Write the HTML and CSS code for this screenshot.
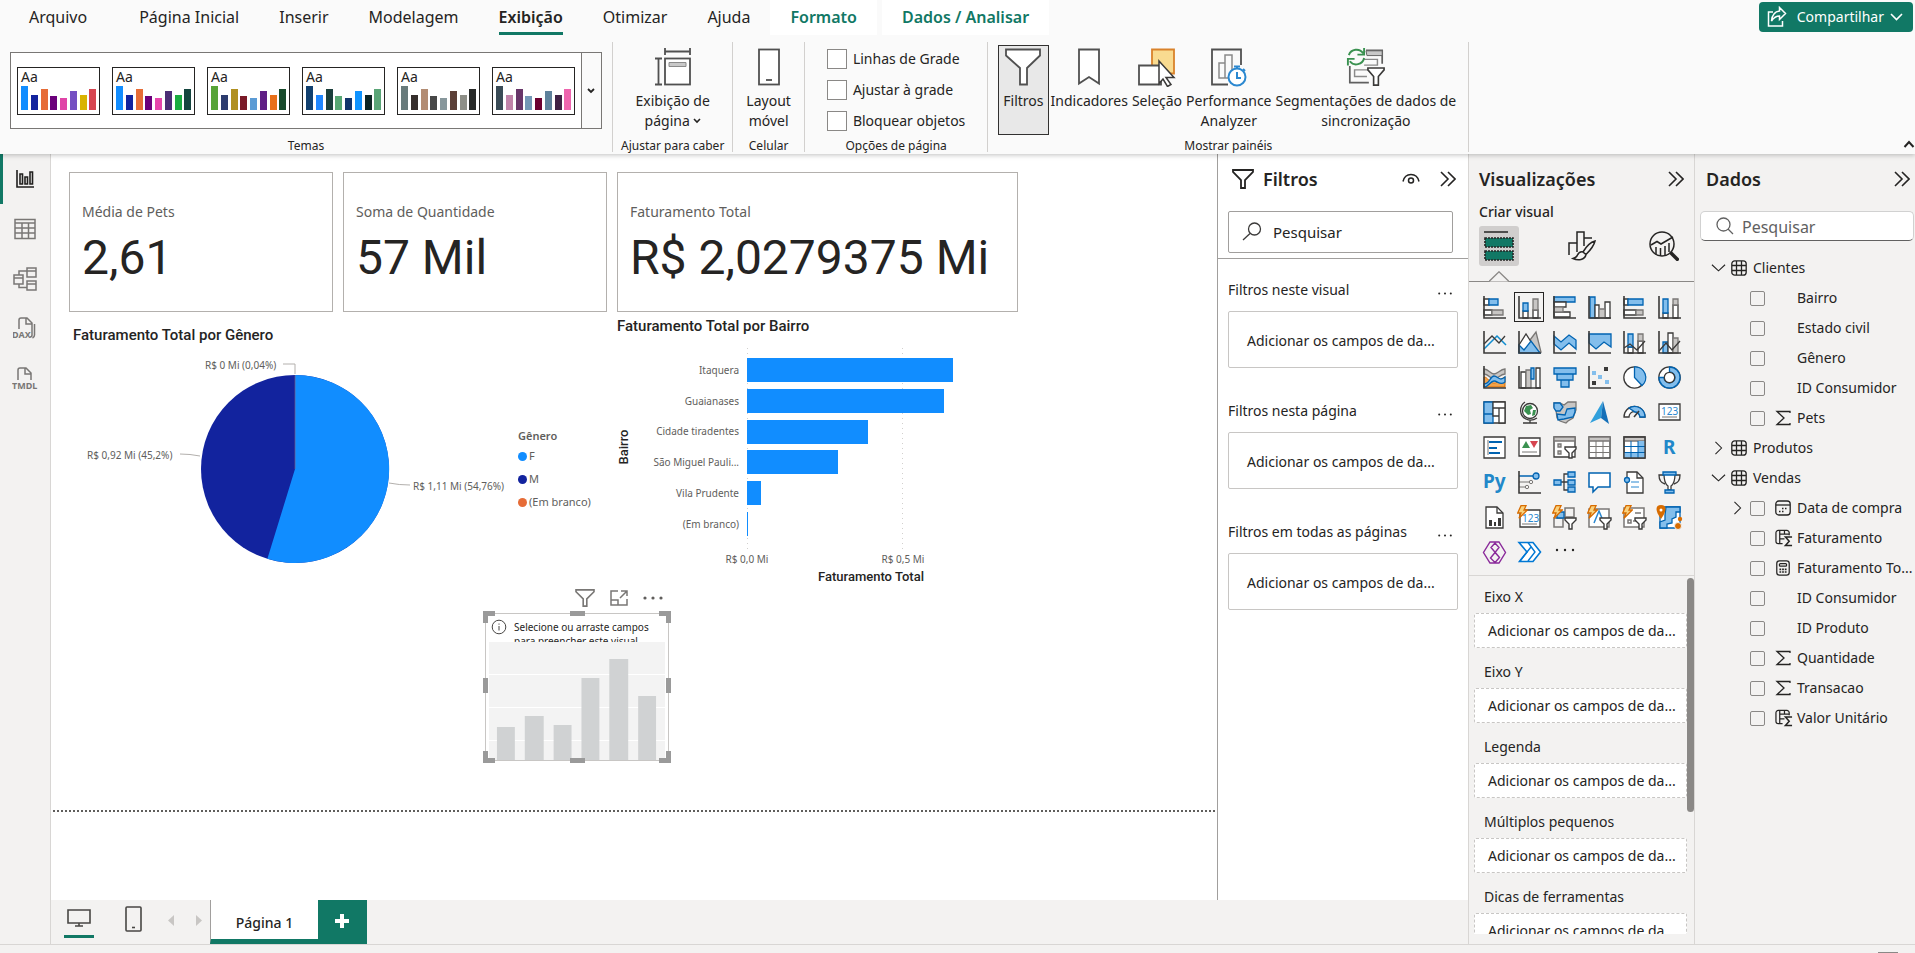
FILE: index.html
```html
<!DOCTYPE html>
<html lang="pt-BR">
<head>
  <meta charset="UTF-8">
  <title>Relatório de Faturamento</title>
  <meta name="viewport" content="width=device-width, initial-scale=1.0">
  <link rel="stylesheet" href="styles.css">
</head>
<body>
  <!-- shared icons -->
  <svg class="sprite" width="0" height="0">
    <symbol id="chevrons" viewBox="0 0 16 16"><path d="M1 1l7 7-7 7M8 1l7 7-7 7" fill="none" stroke="currentColor" stroke-width="1.6"/></symbol>
    <symbol id="funnel" viewBox="0 0 22 20"><path d="M1 1h20v2l-8 8v8H9v-8L1 3z" fill="none" stroke="currentColor" stroke-width="1.8"/></symbol>
    <symbol id="dots" viewBox="0 0 14 3"><g fill="currentColor"><circle cx="1.200" cy="1.500" r="1"/><circle cx="7" cy="1.500" r="1"/><circle cx="12.800" cy="1.500" r="1"/></g></symbol>
    <symbol id="down" viewBox="0 0 16 10"><path d="M1 1.500l7 6.500 7-6.500" fill="none" stroke="currentColor" stroke-width="1.2"/></symbol>
    <symbol id="right" viewBox="0 0 10 16"><path d="M1.500 1l7 7-7 7" fill="none" stroke="currentColor" stroke-width="1.2"/></symbol>
    <symbol id="tbl" viewBox="0 0 16 16"><g fill="none" stroke="currentColor" stroke-width="1.3"><rect x=".8" y=".8" width="14.400" height="14.400" rx="3"/><path d="M5.500 1v14M10.500 1v14M1 5.500h14M1 10.500h14"/></g></symbol>
    <symbol id="sigma" viewBox="0 0 16 16"><path d="M15 3V1.500H2L9 8l-7 6.500h13V13" fill="none" stroke="currentColor" stroke-width="1.3"/></symbol>
    <symbol id="calcol" viewBox="0 0 19 18"><g fill="none" stroke="currentColor" stroke-width="1.3"><path d="M8 15H3.500a2.500 2.500 0 0 1-2.500-2.500v-9A2.500 2.500 0 0 1 3.500 1h9A2.500 2.500 0 0 1 15 3.500V6M5 1v14M10 1v4M5 5h10M5 10h5"/><path d="M18 8h-7l4 4.500-4 4.500h7" stroke-width="1.600"/></g></symbol>
    <symbol id="bolt" viewBox="0 0 11 14"><path d="M4 .7h5L7 5h3.300L2 13.300 4 8H.7z" fill="#f8d27e" stroke="#d86c00" stroke-width="1.3"/></symbol>
    <symbol id="minifunnel" viewBox="0 0 13 13"><path d="M1 1h11v2L8 7v5H5V7L1 3z" fill="#fff" stroke="#3b3a39" stroke-width="1.4"/></symbol>
  </svg>

  <header class="ribbon">
    <div class="top-row">
      <nav class="tabs">
        <a href="#" class="file">Arquivo</a>
        <a href="#">Página Inicial</a>
        <a href="#">Inserir</a>
        <a href="#">Modelagem</a>
        <a href="#" class="active"><span>Exibição</span></a>
        <a href="#">Otimizar</a>
        <a href="#">Ajuda</a>
        <a href="#" class="context">Formato</a>
        <a href="#" class="context">Dados / Analisar</a>
      </nav>
      <button class="share">
        <svg width="20" height="22" viewBox="0 0 20 22" fill="none" stroke="#fff" stroke-width="1.500"><path d="M6 6H1.500v14h14v-5"/><path d="M12.500 1.500l6 6-6 6v-3.500C8.500 10 6.500 12 4.500 15c.5-5 3-9.500 8-10z"/></svg>
        Compartilhar
        <svg width="13" height="8" viewBox="0 0 13 8" fill="none" stroke="#fff" stroke-width="1.600"><path d="M1 1l5.500 5.500L12 1"/></svg>
      </button>
    </div>

    <div class="groups">
      <section class="group themes-group">
        <div class="group-body">
          <div class="themes">
            <button class="theme">Aa
              <svg width="75" height="24"><rect fill="#118dff" width="7" height="24"/><rect fill="#12239e" x="10" y="9" width="7" height="15"/><rect fill="#e66c37" x="20" y="3" width="7" height="21"/><rect fill="#6b007b" x="29" y="10" width="7" height="14"/><rect fill="#e044a7" x="39" y="12" width="7" height="12"/><rect fill="#744ec2" x="49" y="5" width="7" height="19"/><rect fill="#d9b300" x="59" y="9" width="7" height="15"/><rect fill="#d64550" x="68" y="3" width="7" height="21"/></svg>
            </button>
            <button class="theme">Aa
              <svg width="75" height="24"><rect fill="#118dff" width="7" height="24"/><rect fill="#12239e" x="10" y="9" width="7" height="15"/><rect fill="#e66c37" x="20" y="3" width="7" height="21"/><rect fill="#6b007b" x="29" y="10" width="7" height="14"/><rect fill="#e645ab" x="39" y="12" width="7" height="12"/><rect fill="#4b2e75" x="49" y="5" width="7" height="19"/><rect fill="#1aab40" x="59" y="9" width="7" height="15"/><rect fill="#15453f" x="68" y="3" width="7" height="21"/></svg>
            </button>
            <button class="theme">Aa
              <svg width="75" height="24"><rect fill="#57a337" width="7" height="24"/><rect fill="#2c3b6e" x="10" y="9" width="7" height="15"/><rect fill="#b09020" x="20" y="3" width="7" height="21"/><rect fill="#7a1a28" x="29" y="10" width="7" height="14"/><rect fill="#5b9bd5" x="39" y="12" width="7" height="12"/><rect fill="#5f1e85" x="49" y="5" width="7" height="19"/><rect fill="#e8701a" x="59" y="9" width="7" height="15"/><rect fill="#174a2b" x="68" y="3" width="7" height="21"/></svg>
            </button>
            <button class="theme">Aa
              <svg width="75" height="24"><rect fill="#11406f" width="7" height="24"/><rect fill="#1f86ff" x="10" y="9" width="7" height="15"/><rect fill="#1b3f3c" x="20" y="3" width="7" height="21"/><rect fill="#57a773" x="29" y="10" width="7" height="14"/><rect fill="#11346b" x="39" y="12" width="7" height="12"/><rect fill="#0f93ff" x="49" y="5" width="7" height="19"/><rect fill="#0c2422" x="59" y="9" width="7" height="15"/><rect fill="#5aa577" x="68" y="3" width="7" height="21"/></svg>
            </button>
            <button class="theme">Aa
              <svg width="75" height="24"><rect fill="#687a7b" width="7" height="24"/><rect fill="#352e2c" x="10" y="9" width="7" height="15"/><rect fill="#b28c73" x="20" y="3" width="7" height="21"/><rect fill="#484848" x="29" y="10" width="7" height="14"/><rect fill="#87979c" x="39" y="12" width="7" height="12"/><rect fill="#5c4038" x="49" y="5" width="7" height="19"/><rect fill="#8e8f88" x="59" y="9" width="7" height="15"/><rect fill="#272928" x="68" y="3" width="7" height="21"/></svg>
            </button>
            <button class="theme">Aa
              <svg width="75" height="24"><rect fill="#3a4b56" width="7" height="24"/><rect fill="#c083a9" x="10" y="9" width="7" height="15"/><rect fill="#683669" x="20" y="3" width="7" height="21"/><rect fill="#7397b5" x="29" y="10" width="7" height="14"/><rect fill="#6b0030" x="39" y="12" width="7" height="12"/><rect fill="#5e819b" x="49" y="5" width="7" height="19"/><rect fill="#3f2144" x="59" y="9" width="7" height="15"/><rect fill="#ee65ae" x="68" y="3" width="7" height="21"/></svg>
            </button>
            <button class="more-themes" aria-label="Mais temas"><svg width="8" height="6" viewBox="0 0 8 6"><path d="M1 1l3 3 3-3" fill="none" stroke="#252423" stroke-width="1.800"/></svg></button>
          </div>
        </div>
        <p class="group-name">Temas</p>
      </section>

      <section class="group fit-group">
        <div class="group-body">
          <button class="tool">
            <svg width="38" height="40" viewBox="0 0 38 40" fill="none" stroke="#505050" stroke-width="1.800"><path d="M11 1v7M36 1v7M11 4.500h25M1 11.500h7M1 37.500h7M4.500 11.500v26"/><rect x="11" y="11.500" width="25" height="26" fill="#fff"/><path d="M15 15.500h17v4H15z" fill="#c8c8c8" stroke="#8a8a8a" stroke-width="1"/></svg>
            <span>Exibição de<br>página<svg class="caret" width="8" height="6" viewBox="0 0 8 6"><path d="M1 1l3 3 3-3" fill="none" stroke="#252423" stroke-width="1.600"/></svg></span>
          </button>
        </div>
        <p class="group-name">Ajustar para caber</p>
      </section>

      <section class="group mobile-group">
        <div class="group-body">
          <button class="tool">
            <svg width="22" height="40" viewBox="0 0 22 40" fill="none" stroke="#505050" stroke-width="1.800"><rect x="1" y="2.500" width="20" height="35" fill="#fff"/><path d="M8 33h6"/></svg>
            <span>Layout<br>móvel</span>
          </button>
        </div>
        <p class="group-name">Celular</p>
      </section>

      <section class="group options-group">
        <div class="group-body checks">
          <label><input type="checkbox">Linhas de Grade</label>
          <label><input type="checkbox">Ajustar à grade</label>
          <label><input type="checkbox">Bloquear objetos</label>
        </div>
        <p class="group-name">Opções de página</p>
      </section>

      <section class="group panes-group">
        <div class="group-body">
          <button class="tool pressed">
            <svg width="36" height="40" viewBox="0 0 36 40"><path d="M1 2.500h34v6L22 21v16.500h-7V21L1 8.500z" fill="#fff" stroke="#505050" stroke-width="1.800"/></svg>
            <span>Filtros</span>
          </button>
          <button class="tool">
            <svg width="22" height="40" viewBox="0 0 22 40"><path d="M1 2.500h20v34L11 30 1 36.500z" fill="#fff" stroke="#505050" stroke-width="1.800"/></svg>
            <span>Indicadores</span>
          </button>
          <button class="tool">
            <svg width="38" height="40" viewBox="0 0 38 40" stroke-width="1.800"><path d="M14 2.500h22v24H14z" fill="#f9db90" stroke="#d9822b"/><path d="M1 18.500h22v19H1z" fill="#fff" stroke="#505050"/><path d="M21 14l15 16.500h-8l5 7-3.500 2-4.500-7.500-4 4.500z" fill="#fff" stroke="#3b3a39" stroke-width="1.500"/></svg>
            <span>Seleção</span>
          </button>
          <button class="tool">
            <svg width="36" height="40" viewBox="0 0 36 40" fill="none"><path d="M17 37.500H1v-35h29V18" stroke="#505050" stroke-width="1.800"/><path d="M8 16h6v15H8zM14 8h7v23h-7z" stroke="#8a8a8a" stroke-width="1.500"/><circle cx="26" cy="30" r="8.500" fill="#fff" stroke="#2b88d0" stroke-width="2"/><path d="M26 25v6h4M23 19.500h6M26 20v2M32 22l2 2" stroke="#2b88d0" stroke-width="2"/></svg>
            <span>Performance<br>Analyzer</span>
          </button>
          <button class="tool">
            <svg width="40" height="42" viewBox="0 0 40 42" fill="none"><path d="M20 3.500h17v14M3 20v17.500h20" stroke="#606060" stroke-width="1.800"/><path d="M20 4h17v5H21z" fill="#c8c8c8" stroke="#606060"/><path d="M18 13h14v6H18M24 24H8v7h13" stroke="#8a8a8a" stroke-width="1.500"/><path d="M2 8.500a8.500 8.500 0 0 1 15-2M18 1v7h-7M18 11.500a8.500 8.500 0 0 1-15 3.500M1 19.500v-7h7" stroke="#3a9150" stroke-width="2"/><path d="M22 22h17v2l-6 7v9h-5v-9l-6-7z" fill="#fff" stroke="#3b3a39" stroke-width="1.700"/></svg>
            <span>Segmentações de dados de<br>sincronização</span>
          </button>
        </div>
        <p class="group-name">Mostrar painéis</p>
      </section>

      <button class="collapse" aria-label="Recolher faixa"><svg width="12" height="8" viewBox="0 0 12 8"><path d="M1.500 7L6 2l4.500 5" fill="none" stroke="#252423" stroke-width="2"/></svg></button>
    </div>
  </header>

  <div class="workspace">
    <div class="left">
      <nav class="rail">
        <a href="#" class="current" aria-label="Relatório"><svg width="20" height="20" viewBox="0 0 20 20" fill="none" stroke="#201f1e" stroke-width="1.600"><path d="M2 1v17h17"/><path d="M5 5h2.500v10H5zM10 8h2.500v7H10zM15 3h2.500v12H15z"/></svg></a>
        <a href="#" aria-label="Tabela"><svg width="22" height="22" viewBox="0 0 22 22" fill="none" stroke="#797775" stroke-width="1.500"><path d="M1 1.500h20v19H1zM1 5h20M1 10h20M1 15h20M8 5v15M14.500 5v15"/></svg></a>
        <a href="#" aria-label="Modelo"><svg width="24" height="24" viewBox="0 0 24 24" fill="none" stroke="#797775" stroke-width="1.500"><path d="M1 8h9v9H1zM1 11h9M14 1h9v9h-9zM14 4h9M14 14h9v9h-9zM14 17h9M6 8V4h8M6 17v3.500h8"/></svg></a>
        <a href="#" aria-label="Consulta DAX"><svg width="24" height="24" viewBox="0 0 24 24" fill="none" stroke="#797775" stroke-width="1.500"><path d="M6 12V3q0-2 2-2h6l5 5v12q0 2-2 2M13 1v6h6M21.500 7v11q0 2-2 3"/><text x="-1" y="21">DAX</text></svg></a>
        <a href="#" aria-label="TMDL"><svg width="26" height="24" viewBox="0 0 26 24" fill="none" stroke="#797775" stroke-width="1.500"><path d="M6 13V3q0-2 2-2h6l5 5v7M13 1v6h6"/><text x="0" y="22">TMDL</text></svg></a>
      </nav>

      <div class="stage">
        <main class="canvas">
          <div class="report">
            <article class="card"><h3>Média de Pets</h3><p>2,61</p></article>
            <article class="card"><h3>Soma de Quantidade</h3><p>57 Mil</p></article>
            <article class="card"><h3>Faturamento Total</h3><p>R$ 2,0279375 Mi</p></article>

            <figure class="pie">
              <figcaption>Faturamento Total por Gênero</figcaption>
              <div class="pie-body">
                <svg width="446" height="225" viewBox="0 0 446 225">
                  <circle cx="226" cy="124" r="94" fill="#12239e"/>
                  <path d="M226 124V30A94 94 0 1 1 198.400 213.800z" fill="#118dff"/>
                  <path d="M226 124V30" stroke="#7a5a80" stroke-width=".7"/>
                  <path d="M214 19h12v10M111 109q10 0 20 2M320 138q10 2 21 2" fill="none" stroke="#b3b0ad"/>
                  <text x="136" y="24">R$ 0 Mi (0,04%)</text>
                  <text x="18" y="114">R$ 0,92 Mi (45,2%)</text>
                  <text x="344" y="145">R$ 1,11 Mi (54,76%)</text>
                </svg>
                <ul class="legend">
                  <li class="legend-title">Gênero</li>
                  <li class="f">F</li>
                  <li class="m">M</li>
                  <li class="blank">(Em branco)</li>
                </ul>
              </div>
            </figure>

            <figure class="bars">
              <figcaption>Faturamento Total por Bairro</figcaption>
              <svg width="400" height="250" viewBox="0 0 400 250">
                <path d="M130.500 12v202M285.500 12v202" stroke="#d2d0ce" stroke-dasharray="1 4"/>
                <g fill="#118dff">
                  <rect x="130" y="22" width="206" height="24"/>
                  <rect x="130" y="53" width="197" height="24"/>
                  <rect x="130" y="84" width="121" height="24"/>
                  <rect x="130" y="114" width="91" height="24"/>
                  <rect x="130" y="145" width="14" height="24"/>
                  <rect x="130" y="176" width="1" height="24"/>
                </g>
                <g text-anchor="end">
                  <text x="122" y="38">Itaquera</text>
                  <text x="122" y="69">Guaianases</text>
                  <text x="122" y="99">Cidade tiradentes</text>
                  <text x="122" y="130">São Miguel Pauli...</text>
                  <text x="122" y="161">Vila Prudente</text>
                  <text x="122" y="192">(Em branco)</text>
                </g>
                <g text-anchor="middle">
                  <text x="130" y="227">R$ 0,0 Mi</text>
                  <text x="286" y="227">R$ 0,5 Mi</text>
                  <text class="axis-title" x="254" y="245">Faturamento Total</text>
                  <text class="axis-title" transform="translate(11 111) rotate(-90)">Bairro</text>
                </g>
              </svg>
            </figure>
          </div>

          <div class="empty-visual">
            <div class="visual-tools">
              <button aria-label="Filtros do visual"><svg width="20" height="18"><use href="#funnel"/></svg></button>
              <button aria-label="Modo de foco"><svg width="18" height="16" viewBox="0 0 18 16" fill="none" stroke="#797775" stroke-width="1.500"><path d="M8 1H1v14h16V9M1 10h7v5M11 1h6v5M17 1l-7 7"/></svg></button>
              <button aria-label="Mais opções"><svg width="20" height="4" fill="#605e5c"><circle cx="2" cy="2" r="1.600"/><circle cx="10" cy="2" r="1.600"/><circle cx="18" cy="2" r="1.600"/></svg></button>
            </div>
            <div class="visual-frame">
              <div class="hint">
                <svg width="16" height="16" viewBox="0 0 16 16" fill="none" stroke="#484644"><circle cx="8" cy="8" r="6.800"/><path d="M8 7v4.500M8 4.500v1.200"/></svg>
                <p>Selecione ou arraste campos para preencher este visual</p>
              </div>
              <svg class="ghost" viewBox="0 0 177 118" preserveAspectRatio="none">
                <path d="M0 0h177v118H0z" fill="#f3f3f3"/>
                <path d="M0 32.500h177M0 65.500h177M0 98.500h177" stroke="#fff"/>
                <path d="M8 85h18v33H8zM36 74h19v44H36zM65 83h18v35H65zM93 36h18v82H93zM121 17h19v101h-19zM150 54h18v64h-18z" fill="#d0d2d3"/>
              </svg>
              <svg class="handles" viewBox="0 0 188 152" fill="#9a9a9a">
                <path d="M0 0h12v5H5v7H0zM176 0h12v12h-5V5h-7zM0 140h5v7h7v5H0zM183 140h5v12h-12v-5h7zM87 0h15v5H87zM87 147h15v5H87zM0 67h5v15H0zM183 67h5v15h-5z"/>
              </svg>
            </div>
          </div>
          <div class="page-end"></div>
        </main>

        <aside class="filters">
          <header>
            <svg width="22" height="20"><use href="#funnel"/></svg>
            <h2>Filtros</h2>
            <button aria-label="Mostrar filtros"><svg width="18" height="12" viewBox="0 0 18 12" fill="none" stroke="#252423" stroke-width="1.500"><path d="M1 8.500C2 4 5 1.500 9 1.500s7 2.500 8 7"/><circle cx="9" cy="7.500" r="2.500"/></svg></button>
            <button aria-label="Recolher filtros"><svg width="16" height="18"><use href="#chevrons"/></svg></button>
          </header>
          <div class="filter-search">
            <svg width="20" height="19" viewBox="0 0 20 19" fill="none" stroke="#3b3a39" stroke-width="1.300"><circle cx="12.500" cy="7" r="6"/><path d="M8 11.500L1 18"/></svg>
            <input type="text" placeholder="Pesquisar" aria-label="Pesquisar filtros">
          </div>
          <section>
            <h3>Filtros neste visual <button aria-label="Mais opções"><svg width="14" height="3"><use href="#dots"/></svg></button></h3>
            <div class="drop">Adicionar os campos de da...</div>
          </section>
          <section>
            <h3>Filtros nesta página <button aria-label="Mais opções"><svg width="14" height="3"><use href="#dots"/></svg></button></h3>
            <div class="drop">Adicionar os campos de da...</div>
          </section>
          <section>
            <h3>Filtros em todas as páginas <button aria-label="Mais opções"><svg width="14" height="3"><use href="#dots"/></svg></button></h3>
            <div class="drop">Adicionar os campos de da...</div>
          </section>
        </aside>
      </div>

      <footer class="pages">
        <button class="view on" aria-label="Computador"><svg width="24" height="18" viewBox="0 0 24 18" fill="none" stroke="#484644" stroke-width="1.600"><path d="M1 1h22v13H1zM12 14v3M8 17h8"/></svg></button>
        <button class="view phone" aria-label="Celular"><svg width="17" height="26" viewBox="0 0 17 26" fill="none" stroke="#484644" stroke-width="1.600"><rect x="1" y="1" width="15" height="24" rx="1"/><path d="M7 21.500h3"/></svg></button>
        <button class="step" aria-label="Página anterior"><svg width="6" height="11"><path d="M6 0v11L0 5.500z" fill="#c8c6c4"/></svg></button>
        <button class="step" aria-label="Próxima página"><svg width="6" height="11"><path d="M0 0v11l6-5.500z" fill="#c8c6c4"/></svg></button>
        <button class="page-tab">Página 1</button>
        <button class="add" aria-label="Nova página"><svg width="14" height="14"><path d="M7 0v14M0 7h14" stroke="#fff" stroke-width="4"/></svg></button>
      </footer>
    </div>

    <aside class="visuals">
      <header><h2>Visualizações</h2><button aria-label="Recolher visualizações"><svg width="16" height="18"><use href="#chevrons"/></svg></button></header>
      <h3>Criar visual</h3>
      <div class="modes">
        <button class="on" aria-label="Criar visual"><svg width="30" height="32" viewBox="0 0 30 32"><path d="M0 2h24" stroke="#252423" stroke-width="1.500"/><g fill="#117865" stroke="#252423" stroke-width="1.600" stroke-dasharray="2 1"><path d="M1 8h28v9H1zM1 21h28v9H1z"/></g></svg></button>
        <button aria-label="Formatar visual"><svg width="28" height="30" viewBox="0 0 28 30" fill="none" stroke="#252423" stroke-width="1.500"><path d="M1 24V12h8M9 21V1h7v14M16 7h8"/><path d="M27 10c-4 1-9 6-12 11l3 2.500c4-4 8-9 9-13.500zM15 21c-4-1-5 2-6 4-1 1.500-2 2-4 2.500 5 2.500 12 1.500 13-4" fill="#f3f2f1"/></svg></button>
        <button aria-label="Análise"><svg width="30" height="30" viewBox="0 0 30 30" fill="none" stroke="#252423" stroke-width="1.500"><circle cx="13" cy="13" r="12"/><path d="M2 14l6-3.500 4 2.500 12-7M7 16v7M11.500 17v8M16 15v9M20 12v9"/><path d="M21.500 21.500l8 8" stroke-width="3.500"/></svg></button>
      </div>
      <svg class="notch" width="20" height="11" viewBox="0 0 20 11"><path d="M0 10.500L10 .8l10 9.700" fill="#f3f2f1" stroke="#8a8886" stroke-width="1.300"/></svg>

      <div class="gallery">
        <button><svg viewBox="0 0 23 23"><path class="w" d="M1 3h5v6H1zM1 14h8v5H1z"/><path class="b" d="M6 3h9v6H6z"/><path class="g" d="M9 14h11v5H9z"/><path class="ax" d="M1 0v22h22"/></svg></button>
        <button class="on"><svg viewBox="0 0 23 23"><path class="w" d="M5 15h5v7H5zM15 14h5v8h-5z"/><path class="b" d="M5 7h5v8H5z"/><path class="g" d="M15 3h5v11h-5z"/><path class="ax" d="M1 0v22h22"/></svg></button>
        <button><svg viewBox="0 0 23 23"><path class="b" d="M1 1h21v5H1z"/><path class="w" d="M1 6h12v5H1zM1 16h16v5H1z"/><path class="g" d="M1 11h9v5H1z"/><path class="ax" d="M1 0v22h22"/></svg></button>
        <button><svg viewBox="0 0 23 23"><path class="b" d="M2 1h5v21H2z"/><path class="w" d="M7 9h4v13H7zM17 6h5v16h-5z"/><path class="g" d="M11 13h6v9h-6z"/><path class="ax" d="M1 0v22h22"/></svg></button>
        <button><svg viewBox="0 0 23 23"><path class="w" d="M1 3h4v6H1zM1 14h12v5H1z"/><path class="b" d="M5 3h15v6H5z"/><path class="g" d="M13 14h7v5h-7z"/><path class="ax" d="M1 0v22h22"/></svg></button>
        <button><svg viewBox="0 0 23 23"><path class="w" d="M5 17h5v5H5zM15 9h5v13h-5z"/><path class="b" d="M5 3h5v14H5z"/><path class="g" d="M15 3h5v6h-5z"/><path class="ax" d="M1 0v22h22"/></svg></button>

        <button><svg viewBox="0 0 23 23"><path d="M1 18l13-13 9 9" fill="none" stroke="#118dcf" stroke-width="1.500"/><path class="ax thin" d="M1 13l8-8 7 7 6-7"/><path class="ax" d="M1 0v22h22"/></svg></button>
        <button><svg viewBox="0 0 23 23"><path class="g" d="M12 9l6-8 5 20H12z"/><path class="w" d="M1 14L8 3l7 11v7H1z"/><path class="b" d="M1 14l5 5 7-9 9 12H1z"/><path class="ax" d="M1 0v22h22"/></svg></button>
        <button><svg viewBox="0 0 23 23"><path class="b" d="M1 5l7 6 8-7 7 5v9l-7-6-8 7-7-6z"/><path class="ax" d="M1 0v22h22"/></svg></button>
        <button><svg viewBox="0 0 23 23"><path class="b" d="M1 3h22v13l-7-5-8 7-7-6z"/><path class="ax" d="M1 0v22h22"/></svg></button>
        <button><svg viewBox="0 0 23 23"><path class="w" d="M5 16h5v6H5zM15 10h5v12h-5z"/><path class="b" d="M5 3h5v13H5z"/><path class="g" d="M15 3h5v7h-5z"/><path class="ax thin" d="M1 17l6-4 7 6 8-9"/><path class="ax" d="M1 0v22h22"/></svg></button>
        <button><svg viewBox="0 0 23 23"><path class="b" d="M5 11h5v11H5z"/><path class="w" d="M10 2h5v20h-5z"/><path class="g" d="M15 7h5v15h-5z"/><path class="ax thin" d="M1 20l7-8 6 7 8-9"/><path class="ax" d="M1 0v22h22"/></svg></button>

        <button><svg viewBox="0 0 23 23"><path d="M1 11c4 0 5 6 10 6s7-5 11-6v10H1z" fill="#f2a24a" stroke="#d86c00"/><path class="g" d="M1 3c5 0 6 5 10 5s6-5 11-5v5c-5 0-7 5-11 5S6 8 1 8z"/><path class="b" d="M1 18c6 0 6-8 10-8s5 6 11 1v5c-5 4-7-1-11-1s-5 6-10 6z"/><path class="ax" d="M1 0v22h22"/></svg></button>
        <button><svg viewBox="0 0 23 23"><path class="w" d="M3 6h5v16H3zM18 2h4v20h-4z"/><path class="g" d="M8 4h5v18H8z"/><path class="b" d="M13 2h3v11h-3z"/><path class="ax" d="M1 0v22h22"/></svg></button>
        <button><svg viewBox="0 0 23 23"><path class="b" d="M1 2h22v6H1zM4 8h16v6H4zM8 14h8v7H8z"/></svg></button>
        <button><svg viewBox="0 0 23 23"><path d="M16 1h4v4h-4zM4 15h4v4H4z" fill="#3b3a39"/><path d="M4 5h4v4H4zM10 9h4v4h-4zM17 14h4v4h-4z" fill="#83beec"/><path class="ax" d="M1 0v22h22"/></svg></button>
        <button><svg viewBox="0 0 23 23"><circle class="w" cx="11.500" cy="11.500" r="10.700"/><path class="b" d="M11.500 1v10.500l7.500 8A10.500 10.500 0 0 0 11.500 1z"/></svg></button>
        <button><svg viewBox="0 0 23 23"><circle class="w" cx="11.500" cy="11.500" r="10.700"/><path class="b" d="M11.500 1v5a5.500 5.500 0 1 1-5.500 5.500H1A10.500 10.500 0 1 0 11.500 1z"/><circle class="w" cx="11.500" cy="11.500" r="5.200"/></svg></button>

        <button><svg viewBox="0 0 23 23"><path class="w" d="M1 1h21v21H1z"/><path class="b" d="M1 1h9v12H1zM1 13h9v9H1z"/><path class="w" d="M10 1h12v6H10zM10 7h6v8h-6zM16 7h6v15h-6z"/></svg></button>
        <button><svg viewBox="0 0 23 23"><circle class="w" cx="12" cy="10" r="7.500"/><path d="M8 5l5-1 2 3-3 2 1 4-3 1-4-4zM15 9h3l-1 5-3 1z" fill="#3a9150"/><path class="ax thin" d="M7 1C1 5 1 15 8 18c4 2 8 1 11-1M12 19v3M5 22h14"/></svg></button>
        <button><svg viewBox="0 0 23 23"><path class="g" d="M1 2h6l4 2 4-3h8v8l-3 8-5 3-2 2-6-2-3-3-1-8-2-3z"/><path class="b" d="M1 2h6l3 4-3 4H3L1 7zM14 8l8-1v4l-2 5-9 2-6 1-1-6 8 1z"/></svg></button>
        <button><svg viewBox="0 0 23 23"><path d="M15 0L2 22l11-5z" fill="#31a0dc"/><path d="M15 0l6 23-8-6z" fill="#1570b8"/></svg></button>
        <button><svg viewBox="0 0 23 23"><path class="w" d="M1 16a10.500 10.500 0 0 1 21 0h-5a5.500 5.500 0 0 0-11 0z"/><path class="b" d="M6 7a10.500 10.500 0 0 1 16 9h-5c-1-4-3-5-5-5z"/><path class="ax" d="M11 16l5-6"/></svg></button>
        <button><svg viewBox="0 0 23 23"><path class="w" d="M1 3h21v16H1z"/><path d="M4 16h15" stroke="#797775"/><text class="num" x="3" y="14">123</text></svg></button>

        <button><svg viewBox="0 0 23 23"><path class="w" d="M1 1h21v21H1z"/><path d="M5 4v15" stroke="#797775"/><path d="M6 6h13M6 12h8M6 17h11" stroke="#0063b1" stroke-width="2"/></svg></button>
        <button><svg viewBox="0 0 23 23"><path class="w" d="M1 2h21v18H1z"/><path d="M8 5l4 7H4z" fill="#3a9150"/><path d="M12 5h8l-4 7z" fill="#d64550"/><path d="M4 16h15" stroke="#797775"/></svg></button>
        <button><svg viewBox="0 0 23 23"><path class="w" d="M1 1h21v20H1z"/><path class="g" d="M1 1h21v4H1zM5 8h3v3H5zM5 15h3v3H5z"/><use href="#minifunnel" x="11" y="10" width="13" height="13"/></svg></button>
        <button><svg viewBox="0 0 23 23"><path class="w" d="M1 1h21v21H1z"/><path class="g" d="M1 1h21v4H1z"/><path d="M1 10.500h21M1 16.500h21M8 5v17M15 5v17" stroke="#797775"/></svg></button>
        <button><svg viewBox="0 0 23 23"><path class="w" d="M1 1h21v21H1z"/><path class="g" d="M1 1h21v4H1z"/><path d="M15 5h7v17H1v-6h14z" fill="#83beec"/><path d="M1 10.500h21M1 16.500h21M8 5v17M15 5v17" stroke="#0063b1"/><path class="ax thin" d="M1 1h21v21H1z"/></svg></button>
        <button><svg viewBox="0 0 23 23"><text class="letters" x="5" y="18">R</text></svg></button>

        <button><svg viewBox="0 0 23 23"><text class="letters" x="0" y="17">Py</text></svg></button>
        <button><svg viewBox="0 0 23 23"><path d="M1 5h15" stroke="#0063b1" stroke-width="1.500"/><circle class="b" cx="18" cy="5" r="3"/><path d="M1 11h10M1 16h6" stroke="#797775"/><circle cx="13" cy="11" r="1.700" fill="none" stroke="#797775"/><circle cx="9" cy="16" r="1.700" fill="none" stroke="#797775"/><path class="ax" d="M1 0v22h22"/></svg></button>
        <button><svg viewBox="0 0 23 23"><path class="ax thin" d="M8 11h7M15 3h-4v16h4"/><path class="b" d="M1 9h7v5H1zM15 1h7v5h-7zM15 9h7v5h-7zM15 16h7v5h-7z"/></svg></button>
        <button><svg viewBox="0 0 23 23"><path d="M1 2h21v14H10l-5 5v-5H1z" fill="#fff" stroke="#0063b1" stroke-width="1.500"/></svg></button>
        <button><svg viewBox="0 0 23 23"><path class="w" d="M4 1h10l6 6v15H4z"/><path class="ax thin" d="M14 1v6h6"/><path d="M8 11h8M8 16h8" stroke="#2b88d0"/><circle class="b" cx="4" cy="9" r="2.500"/></svg></button>
        <button><svg viewBox="0 0 23 23"><path class="ax thin" d="M6 4H1c0 6 2 8 6 9M17 4h5c0 6-2 8-6 9"/><path class="w" d="M6 3h11c0 7-1 10-4 12v4h-3v-4C7 13 6 10 6 3z"/><path class="b" d="M5 1h13v3H5zM7 19h9v3H7z"/></svg></button>

        <button><svg viewBox="0 0 23 23"><path class="w" d="M3 1h11l6 6v15H3z"/><path class="ax thin" d="M14 1v6h6"/><path d="M6 14h3v6H6zM11 16h2v4h-2zM15 12h3v8h-3z" fill="#3b3a39"/></svg></button>
        <button><svg viewBox="0 0 23 23"><path class="w" d="M2 4h20v17H2z"/><path d="M4 18h15" stroke="#797775"/><text class="num" x="4" y="16">123</text><use href="#bolt" x="-1" y="-1" width="11" height="14"/></svg></button>
        <button><svg viewBox="0 0 23 23"><path d="M1 12h9v9H1zM12 2h9v9h-9z" fill="none" stroke="#797775" stroke-width="1.500"/><path class="b" d="M4 6h7v6H4z"/><use href="#minifunnel" x="11" y="11" width="13" height="13"/><use href="#bolt" x="-1" y="-1" width="11" height="14"/></svg></button>
        <button><svg viewBox="0 0 23 23"><path d="M1 3h20v18H1z" fill="#fff" stroke="#797775" stroke-width="1.500"/><path d="M6 17l5-12 5 12" fill="none" stroke="#2b88d0" stroke-width="1.500"/><use href="#minifunnel" x="11" y="11" width="13" height="13"/><use href="#bolt" x="-1" y="-1" width="11" height="14"/></svg></button>
        <button><svg viewBox="0 0 23 23"><path d="M1 2h20v19H1z" fill="#fff" stroke="#797775" stroke-width="1.500"/><path d="M12 7h6M5 14h3v3H5zM10 15h4" stroke="#797775" stroke-width="1.500" fill="none"/><use href="#minifunnel" x="11" y="11" width="13" height="13"/><use href="#bolt" x="-1" y="-1" width="11" height="14"/></svg></button>
        <button><svg viewBox="0 0 23 23"><path d="M2 1h20v21H2z" fill="#fff" stroke="#0063b1" stroke-width="1.300"/><path class="b" d="M8 1h14v5h-4v5l-4 2v4l-5 1v4H2v-6l5-2V9z"/><path d="M3-1c6 0 6 6 0 14C-3 5-3-1 3-1z" fill="#d86c00"/><circle cx="3" cy="4" r="1.500" fill="#fff"/><circle cx="20" cy="20" r="3.500" fill="#d86c00" stroke="#f3f2f1"/><circle cx="22" cy="13" r="2.200" fill="#d86c00"/></svg></button>

        <button><svg viewBox="0 0 23 23"><path d="M7 1h9l6.500 10.500L16 22H7L.5 11.500zM12 2l4 4.500-4 5 4.500 5L12 21.500M12 2L8 6.500l8.500 10M12 11.500L7.500 17l4.500 4.500" fill="none" stroke="#8a2a9a" stroke-width="1.400"/></svg></button>
        <button><svg viewBox="0 0 23 23"><path d="M1 1.500h14l7.500 9.500-7.500 9.500H1.500L9 11z" fill="#fff" stroke="#0078d4" stroke-width="1.600"/><path d="M10 1.500l7 9.500-7 9M2 20L13 6" fill="none" stroke="#0078d4" stroke-width="1.400"/></svg></button>
        <button><svg viewBox="0 0 23 23" fill="#252423"><circle cx="4" cy="9" r="1.200"/><circle cx="12" cy="9" r="1.200"/><circle cx="20" cy="9" r="1.200"/></svg></button>
      </div>

      <div class="wells">
        <div class="well-list">
          <h4>Eixo X</h4><div class="well">Adicionar os campos de da...</div>
          <h4>Eixo Y</h4><div class="well">Adicionar os campos de da...</div>
          <h4>Legenda</h4><div class="well">Adicionar os campos de da...</div>
          <h4>Múltiplos pequenos</h4><div class="well">Adicionar os campos de da...</div>
          <h4>Dicas de ferramentas</h4><div class="well">Adicionar os campos de da...</div>
        </div>
        <div class="scrollbar"></div>
      </div>
    </aside>

    <aside class="data">
      <header><h2>Dados</h2><button aria-label="Recolher dados"><svg width="16" height="18"><use href="#chevrons"/></svg></button></header>
      <div class="data-search">
        <svg width="18" height="18" viewBox="0 0 18 18" fill="none" stroke="#616161" stroke-width="1.300"><circle cx="7.500" cy="7.500" r="6.500"/><path d="M12 12l5 5"/></svg>
        <input type="text" placeholder="Pesquisar" aria-label="Pesquisar dados">
      </div>
      <ul class="tree">
        <li class="table"><svg class="arrow"><use href="#down"/></svg><svg class="ico"><use href="#tbl"/></svg>Clientes</li>
        <li><label><input type="checkbox"><span class="ico"></span>Bairro</label></li>
        <li><label><input type="checkbox"><span class="ico"></span>Estado civil</label></li>
        <li><label><input type="checkbox"><span class="ico"></span>Gênero</label></li>
        <li><label><input type="checkbox"><span class="ico"></span>ID Consumidor</label></li>
        <li><label><input type="checkbox"><svg class="ico"><use href="#sigma"/></svg>Pets</label></li>
        <li class="table"><svg class="arrow"><use href="#right"/></svg><svg class="ico"><use href="#tbl"/></svg>Produtos</li>
        <li class="table"><svg class="arrow"><use href="#down"/></svg><svg class="ico"><use href="#tbl"/></svg>Vendas</li>
        <li class="nested"><svg class="arrow"><use href="#right"/></svg><label><input type="checkbox"><svg class="ico" viewBox="0 0 16 16" fill="none" stroke="currentColor" stroke-width="1.300"><rect x=".8" y="1" width="14.400" height="14" rx="3"/><path d="M1 5h14"/><path d="M7 8.500h1.500M10 8.500h1.500M4 11.500h1.500M7 11.500h1.500" stroke-width="1.600"/></svg>Data de compra</label></li>
        <li><label><input type="checkbox"><svg class="ico wide"><use href="#calcol"/></svg>Faturamento</label></li>
        <li><label><input type="checkbox"><svg class="ico" viewBox="0 0 16 18" fill="none" stroke="currentColor" stroke-width="1.400"><rect x="1" y="1" width="14" height="16" rx="3"/><rect x="4" y="4" width="8" height="3" rx="1"/><path d="M4 10.500h2M7 10.500h2M10 10.500h2M4 13.500h2M7 13.500h2M10 13.500h2" stroke-width="1.800"/></svg>Faturamento To...</label></li>
        <li><label><input type="checkbox"><span class="ico"></span>ID Consumidor</label></li>
        <li><label><input type="checkbox"><span class="ico"></span>ID Produto</label></li>
        <li><label><input type="checkbox"><svg class="ico"><use href="#sigma"/></svg>Quantidade</label></li>
        <li><label><input type="checkbox"><svg class="ico"><use href="#sigma"/></svg>Transacao</label></li>
        <li><label><input type="checkbox"><svg class="ico wide"><use href="#calcol"/></svg>Valor Unitário</label></li>
      </ul>
    </aside>
  </div>
  <div class="status"><span></span></div>
</body>
</html>
```
FILE: styles.css
```css
* {
  box-sizing: border-box;
  margin: 0;
  padding: 0;
}

body {
  height: 100vh;
  display: flex;
  flex-direction: column;
  overflow: hidden;
  background: #f3f2f1;
  color: #252423;
  font-family: "Segoe UI", "Noto Sans", sans-serif;
  font-size: 14px;
  line-height: 20px;
}

button,
input {
  font: inherit;
  color: inherit;
}

button {
  border: none;
  background: none;
}

svg {
  display: block;
  flex: none;
}

ul {
  list-style: none;
}

h2 {
  font-size: 18px;
  font-weight: 600;
  line-height: 24px;
}

h3,
h4 {
  font-size: 14px;
  font-weight: 400;
}

input[type="checkbox"] {
  appearance: none;
  flex: none;
  background: #fff;
  border: 1px solid #8a8886;
}

.sprite {
  position: absolute;
}

/* Ribbon */
.ribbon {
  background: #fafafa;
  box-shadow: 0 1px 5px rgba(0, 0, 0, 0.25);
  position: relative;
  z-index: 2;
}

.top-row {
  display: flex;
  justify-content: space-between;
  height: 42px;
}

.tabs {
  display: flex;
  padding-left: 9px;
}

.tabs a {
  height: 35px;
  padding: 0 20px;
  font-size: 16px;
  line-height: 34px;
  color: #252423;
  text-decoration: none;
  white-space: nowrap;
}

.tabs .file {
  margin-right: 12px;
}

.tabs .active {
  font-weight: 600;
}

.tabs .active span {
  display: block;
  height: 35px;
  border-bottom: 3px solid #117865;
}

.tabs .context {
  margin-right: 5px;
  background: #fff;
  color: #117865;
  font-weight: 600;
}

.share {
  display: flex;
  align-items: center;
  gap: 10px;
  height: 30px;
  margin: 2px 2px 0 0;
  padding: 0 10px 0 8px;
  border-radius: 4px;
  background: #117865;
  color: #fff;
}

.share svg:last-child {
  margin-left: -4px;
}

.groups {
  display: flex;
  height: 112px;
  padding-bottom: 2px;
}

.group {
  display: flex;
  flex-direction: column;
  justify-content: space-between;
  padding: 0 10px;
  border-right: 1px solid #d2d0ce;
}

.group-body {
  display: flex;
  justify-content: center;
  padding-top: 3px;
}

.group-name {
  font-size: 12px;
  line-height: 12px;
  text-align: center;
}

.themes-group .group-body {
  padding-top: 10px;
}

.themes {
  display: flex;
  align-items: center;
  gap: 12px;
  height: 77px;
  padding-left: 6px;
  border: 1px solid #797775;
  background: #fff;
}

.theme {
  display: flex;
  flex-direction: column;
  align-items: flex-start;
  justify-content: space-between;
  width: 83px;
  height: 48px;
  padding: 1px 3px 4px;
  border: 1px solid #252423;
  line-height: 16px;
  text-align: left;
}

.more-themes {
  align-self: stretch;
  width: 20px;
  margin-left: -6px;
  padding-left: 5px;
  border-left: 1px solid #797775;
  background: #fafafa;
}

.tool {
  display: flex;
  flex-direction: column;
  align-items: center;
  gap: 4px;
  height: 90px;
  padding: 1px 1px 0;
  border: 1px solid transparent;
  white-space: nowrap;
}

.tool svg {
  height: 40px;
}

.tool .caret {
  display: inline-block;
  height: 6px;
  margin: 0 0 2px 3px;
}

.tool.pressed {
  padding: 1px 4px 0;
  border-color: #323130;
  background: #e8e8e8;
}

.fit-group {
  padding: 0 8px;
}

.mobile-group {
  padding: 0 11px;
}

.options-group {
  padding: 0 22px;
}

.checks {
  flex-direction: column;
  gap: 11px;
  padding-top: 7px;
}

.checks label {
  display: flex;
  align-items: center;
  gap: 6px;
  height: 20px;
  white-space: nowrap;
}

.checks input {
  width: 20px;
  height: 20px;
}

.collapse {
  align-self: flex-end;
  margin-left: auto;
  padding-bottom: 4px;
}

/* Workspace */
.workspace {
  flex: 1;
  min-height: 0;
  display: flex;
}

.left {
  flex: 1;
  min-width: 0;
  display: grid;
  grid-template-columns: 51px 1fr;
  grid-template-rows: 1fr 44px;
}

.rail {
  grid-row: span 2;
  border-right: 1px solid #d8d6d4;
}

.rail a {
  display: flex;
  align-items: center;
  justify-content: center;
  height: 50px;
}

.rail .current {
  border-left: 3px solid #117865;
  padding-right: 3px;
}

.rail text {
  fill: #797775;
  stroke: none;
  font-size: 9px;
  font-weight: 700;
}

.stage {
  display: flex;
  min-width: 0;
  min-height: 0;
}

.canvas {
  flex: 1;
  min-width: 0;
  padding-top: 18px;
  background: #fff;
  overflow: hidden;
}

.report {
  display: grid;
  grid-template-columns: 264fr 264fr 401fr;
  column-gap: 10px;
  width: 100%;
  max-width: 967px;
  padding-left: 18px;
}

.card {
  height: 140px;
  padding: 29px 12px 0 12px;
  border: 1px solid #b3b0ad;
  white-space: nowrap;
}

.card h3 {
  color: #605e5c;
}

.card p {
  margin-top: 6px;
  font-family: "DIN", Roboto, sans-serif;
  font-size: 48px;
  line-height: 60px;
}

figcaption {
  font-family: "DIN", Roboto, sans-serif;
  font-size: 15px;
  font-weight: 500;
}

figure text {
  fill: #605e5c;
  font-size: 10px;
}

figure .axis-title {
  fill: #252423;
  font-family: "DIN", Roboto, sans-serif;
  font-size: 13px;
  font-weight: 500;
}

.pie {
  grid-column: span 2;
  padding-top: 13px;
}

.pie figcaption {
  padding-left: 4px;
}

.bars {
  padding-top: 4px;
}

.pie-body {
  display: flex;
}

.legend {
  padding-top: 82px;
  color: #605e5c;
  font-size: 11px;
  line-height: 23px;
  white-space: nowrap;
}

.legend li::before {
  content: "";
  display: inline-block;
  width: 9px;
  height: 9px;
  margin: 0 2px 0 3px;
  border-radius: 50%;
  background: #118dff;
  vertical-align: -1px;
}

.legend .legend-title {
  padding-left: 3px;
  font-weight: 600;
  line-height: 17px;
}

.legend .legend-title::before {
  display: none;
}

.legend .m::before {
  background: #12239e;
}

.legend .blank::before {
  background: #e66c37;
}

/* Empty visual */
.empty-visual {
  width: 184px;
  margin-left: 434px;
}

.visual-tools {
  display: flex;
  justify-content: flex-end;
  align-items: center;
  gap: 15px;
  height: 27px;
  padding: 0 6px 3px 0;
  color: #797775;
}

.visual-frame {
  position: relative;
  height: 148px;
  padding: 0 3px;
  border: 1px solid #c8c6c4;
}

.handles {
  position: absolute;
  top: -3px;
  left: -3px;
  width: 188px;
  height: 152px;
}

.hint {
  display: flex;
  gap: 6px;
  height: 28px;
  padding: 5px 0 0 2px;
  overflow: hidden;
}

.hint p {
  padding: 1px 0 0 1px;
  font-size: 10px;
  line-height: 14px;
}

.ghost {
  width: 100%;
  height: 118px;
}

.page-end {
  height: 2px;
  margin: 49px 2px 0;
  background: repeating-linear-gradient(90deg, #605e5c 0 2px, transparent 2px 4px);
}

/* Filters */
.filters {
  width: 251px;
  border-left: 1px solid #a19f9d;
  background: #fff;
}

.filters header,
.visuals header,
.data header {
  display: flex;
  align-items: center;
  height: 50px;
}

.filters header {
  padding: 0 12px 0 14px;
}

.filters header h2 {
  flex: 1;
  margin-left: 9px;
}

.filters header button {
  margin-left: 20px;
}

.filter-search {
  position: relative;
  padding: 7px 15px 5px 10px;
  border-bottom: 1px solid #a19f9d;
}

.filter-search svg {
  position: absolute;
  left: 24px;
  top: 18px;
}

.filter-search input {
  width: 100%;
  height: 42px;
  padding-left: 44px;
  border: 1px solid #a19f9d;
  border-radius: 2px;
  font-size: 15px;
}

input::placeholder {
  color: inherit;
  opacity: 1;
}

.filters section {
  padding: 21px 10px 0;
}

.filters h3 {
  display: flex;
  justify-content: space-between;
  align-items: center;
  padding-right: 6px;
}

.filters h3 button {
  padding-top: 6px;
}

.drop {
  height: 57px;
  margin: 11px 0 12px;
  padding-left: 18px;
  border: 1px solid #c8c6c4;
  border-radius: 2px;
  line-height: 57px;
  white-space: nowrap;
}

/* Page bar */
.pages {
  display: flex;
  background: #f3f2f1;
}

.view {
  display: flex;
  justify-content: center;
  width: 30px;
  margin-left: 13px;
  padding-top: 9px;
}

.view.on {
  height: 38px;
  border-bottom: 3px solid #117865;
}

.view.phone {
  margin: 0 6px 0 24px;
  padding-top: 6px;
}

.step {
  width: 22px;
  margin-left: 6px;
  padding: 0 8px 4px;
}

.page-tab {
  width: 108px;
  padding-top: 6px;
  border-left: 1px solid #a19f9d;
  border-bottom: 5px solid #117865;
  background: #fff;
  font-weight: 500;
}

.add {
  width: 49px;
  padding: 0 17px 3px;
  background: #117865;
}

/* Visualizations */
.visuals {
  display: flex;
  flex-direction: column;
  width: 226px;
  border-left: 1px solid #d8d6d4;
}

.visuals header {
  justify-content: space-between;
  padding: 0 10px;
}

.visuals h3 {
  padding: 0 10px;
  margin-top: -2px;
  font-weight: 500;
}

.modes {
  display: flex;
  justify-content: space-between;
  padding: 4px 10px 0;
}

.modes button {
  display: flex;
  align-items: center;
  justify-content: center;
  width: 40px;
  height: 40px;
  border-radius: 3px;
}

.modes .on {
  background: #d0cecd;
}

.notch {
  margin: 5px 0 -1px 20px;
  position: relative;
}

.gallery {
  display: grid;
  grid-template-columns: repeat(6, 35px);
  grid-auto-rows: 35px;
  padding: 8px 8px 5px;
  border-top: 1px solid #8a8886;
  border-bottom: 1px solid #d8d6d4;
}

.gallery button {
  display: flex;
  align-items: center;
  justify-content: center;
  width: 30px;
  height: 30px;
  margin: 2px;
  border: 1px solid transparent;
}

.gallery .on {
  border-color: #252423;
}

.gallery svg {
  width: 23px;
  height: 23px;
  overflow: visible;
}

.ax {
  fill: none;
  stroke: #3b3a39;
  stroke-width: 1.6;
}

.thin {
  stroke-width: 1.3;
}

.w {
  fill: #fff;
  stroke: #3b3a39;
  stroke-width: 1.3;
}

.b {
  fill: #83beec;
  stroke: #0063b1;
  stroke-width: 1.3;
}

.g {
  fill: #c8c6c4;
  stroke: #797775;
  stroke-width: 1.3;
}

.num {
  fill: #2b88d0;
  font-size: 10px;
}

.letters {
  fill: #2188c9;
  font-size: 19px;
  font-weight: 700;
}

.wells {
  flex: 1;
  min-height: 0;
  display: flex;
  margin-bottom: 10px;
  overflow: hidden;
}

.well-list {
  flex: 1;
  padding: 11px 0 0 5px;
}

.wells h4 {
  padding-left: 10px;
}

.well {
  height: 35px;
  margin: 6px 0 14px;
  padding-left: 13px;
  border: 1px dashed #c8c6c4;
  border-radius: 2px;
  background: #fff;
  line-height: 33px;
  white-space: nowrap;
}

.scrollbar {
  width: 7px;
  height: 234px;
  margin-top: 2px;
  border-radius: 4px;
  background: #8a8886;
}

/* Data */
.data {
  width: 221px;
  border-left: 1px solid #d8d6d4;
}

.data header {
  justify-content: space-between;
  padding: 0 5px 0 11px;
}

.data-search {
  position: relative;
  padding: 7px 1px 0 5px;
}

.data-search svg {
  position: absolute;
  left: 21px;
  top: 13px;
}

.data-search input {
  width: 100%;
  height: 30px;
  padding: 2px 0 0 41px;
  border: 1px solid #d1d1d1;
  border-bottom-color: #616161;
  border-radius: 5px;
  background: #fff;
  color: #616161;
  font-size: 16px;
}

.tree {
  padding-top: 12px;
}

.tree li {
  display: flex;
  align-items: center;
  height: 30px;
  padding-left: 55px;
  white-space: nowrap;
}

.tree label {
  display: flex;
  align-items: center;
}

.tree input {
  width: 15px;
  height: 15px;
  margin-right: 10px;
  border-radius: 2px;
  background: transparent;
}

.ico {
  width: 16px;
  height: 16px;
  margin-right: 6px;
}

.ico.wide {
  width: 18px;
  height: 18px;
  margin-right: 4px;
}

.arrow {
  width: 15px;
  height: 14px;
  margin-right: 5px;
}

.tree .table {
  padding-left: 16px;
}

.tree .nested {
  padding-left: 35px;
}

/* Status bar */
.status {
  height: 9px;
  display: flex;
  justify-content: flex-end;
  align-items: flex-end;
  padding-right: 17px;
  border-top: 1px solid #d8d6d4;
}

.status span {
  width: 20px;
  height: 1px;
  background: #8a8886;
}
```
